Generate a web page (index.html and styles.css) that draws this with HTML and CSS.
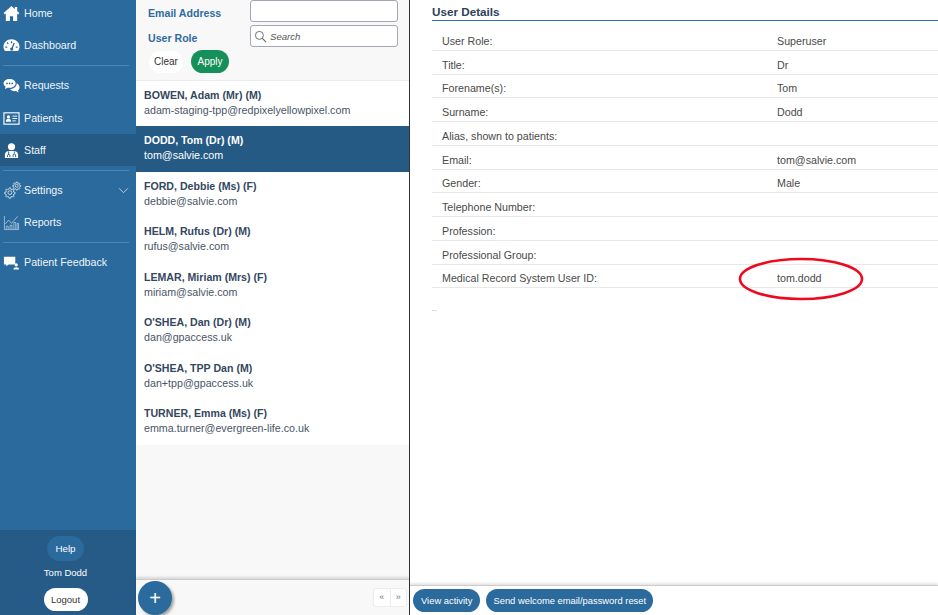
FILE: index.html
```html
<!DOCTYPE html>
<html lang="en">
<head>
<meta charset="utf-8">
<title>User Details</title>
<link rel="stylesheet" href="styles.css">
</head>
<body>
<div class="app">
  <aside class="sidebar">
    <nav class="nav">
      <a class="nav-item nav-first">
        <svg class="ico" viewBox="0 0 18 18"><path fill="#fff" d="M9 1 0.6 8.6 2 10l1-.9V17h4.3v-5h3.4v5H15V9.1l1 .9 1.4-1.4L15 6.4V2h-2.4v2.2z"/></svg>
        <span>Home</span>
      </a>
      <a class="nav-item">
        <svg class="ico" viewBox="0 0 18 18"><path fill="#fff" fill-rule="evenodd" d="M9 2.500C4.300 2.500.5 6 .5 10.400c0 1.500.4 2.800 1.200 4 .2.300.5.400.8.400h13c.3 0 .6-.1.800-.4.800-1.200 1.200-2.500 1.200-4C17.500 6 13.700 2.500 9 2.500zM8.300 4.500h1.400v2H8.300zM3.700 6.400l1-1 1.400 1.400-1 1zM2.500 10h2v1.400h-2zM13.500 10h2v1.400h-2zM11.200 6l1.300.6-2 5a1.700 1.700 0 1 1-1.300-.6z"/></svg>
        <span>Dashboard</span>
      </a>
      <div class="sep"></div>
      <a class="nav-item nav-tall">
        <svg class="ico" viewBox="0 0 18 18"><path fill="#fff" d="M7 2C3.400 2 .6 4 .6 6.700c0 1.500.9 2.800 2.200 3.700L2 12.800l3-1.500c.6.100 1.300.2 2 .2 3.600 0 6.400-2.100 6.400-4.800S10.600 2 7 2z"/><path fill="#fff" d="M14.500 6.500c.2 3.300-3 6-7 6.200.9 1.400 2.700 2.300 4.800 2.300.5 0 1 0 1.500-.1l2.700 1.600-.6-2.500c1-.7 1.600-1.700 1.600-2.900 0-1.900-1.200-3.700-3-4.600z"/><circle cx="4.300" cy="6.800" r=".9" fill="#2b6a9c"/><circle cx="7" cy="6.800" r=".9" fill="#2b6a9c"/><circle cx="9.700" cy="6.800" r=".9" fill="#2b6a9c"/></svg>
        <span>Requests</span>
      </a>
      <a class="nav-item">
        <svg class="ico" viewBox="0 0 18 18"><rect x="1" y="3" width="16" height="12" fill="none" stroke="#fff" stroke-width="1.200"/><circle cx="5.800" cy="7.300" r="1.700" fill="#fff"/><path fill="#fff" d="M3 12.500c0-2 1.200-3.200 2.800-3.200s2.800 1.200 2.800 3.200z"/><path stroke="#fff" stroke-width="1" d="M10 6.500h5M10 9h5M10 11.500h3.500"/></svg>
        <span>Patients</span>
      </a>
      <a class="nav-item nav-active">
        <svg class="ico" viewBox="0 0 18 18"><circle cx="9" cy="5" r="3.800" fill="#fff"/><path fill="#fff" d="M2 17v-3.500c0-2.500 2-4 4.500-4h5c2.500 0 4.500 1.500 4.500 4V17z"/><path fill="none" stroke="#255a85" stroke-width="1" d="M6 10v3.500M12 10v2M4.700 16v-1.500a1.300 1.300 0 0 1 2.600 0V16M10.700 16v-2a1.300 1.300 0 0 1 2.600 0v2"/></svg>
        <span>Staff</span>
      </a>
      <div class="sep"></div>
      <a class="nav-item">
        <svg class="ico ico-gears" viewBox="0 0 18 18" fill="none" stroke="#d5e3ef" stroke-width=".8"><circle cx="6.500" cy="11" r="1.800"/><path d="M6 6.500h1.200l.3 1.300 1 .4 1.100-.7.900.9-.7 1.100.4 1 1.300.3v1.200l-1.300.3-.4 1 .7 1.100-.9.900-1.100-.7-1 .4-.3 1.300H5.800l-.3-1.300-1-.4-1.100.7-.9-.9.7-1.100-.4-1-1.300-.3v-1.200l1.300-.3.4-1-.7-1.100.9-.9 1.100.7 1-.4z"/><circle cx="13" cy="4.500" r="1.400"/><path d="M12.500 1h1l.2 1 .7.300.9-.5.700.7-.5.900.3.700 1 .2v1l-1 .2-.3.700.5.900-.7.700-.9-.5-.7.300-.2 1h-1l-.2-1-.7-.3-.9.500-.7-.7.500-.9-.3-.7-1-.2v-1l1-.2.3-.7-.5-.9.7-.7.900.5.700-.3z"/></svg>
        <span class="nav-label">Settings</span>
        <svg class="chev" viewBox="0 0 12 8"><path fill="none" stroke="#c9dcec" stroke-width="1" d="M1 1.500 6 6.500l5-5"/></svg>
      </a>
      <a class="nav-item">
        <svg class="ico" viewBox="0 0 18 18" fill="none" stroke="#a9c6dd" stroke-width=".9"><path d="M1.500 2v14.500H17"/><path d="M2.500 10.500 6 6.500l3 3.500 6.500-7.500"/><path d="M3.500 16v-3h2v3M7.500 16v-4h2v4M11.500 16V9h2v7M15 16v-6h1.500v6"/></svg>
        <span>Reports</span>
      </a>
      <div class="sep"></div>
      <a class="nav-item">
        <svg class="ico" viewBox="0 0 18 18"><path fill="#fff" d="M1 3h12v8H6l-2.500 2v-2H1z"/><circle cx="14" cy="11.500" r="1.700" fill="#fff"/><path fill="#fff" d="M11 16.500c0-1.700 1.300-2.500 3-2.500s3 .8 3 2.500z"/></svg>
        <span>Patient Feedback</span>
      </a>
    </nav>
    <div class="side-foot">
      <button class="btn-help">Help</button>
      <div class="side-user">Tom Dodd</div>
      <button class="btn-logout">Logout</button>
    </div>
  </aside>

  <section class="middle">
    <form class="filters">
      <div class="filter-row filter-row-first">
        <label class="filter-label">Email Address</label>
        <div class="field"></div>
      </div>
      <div class="filter-row">
        <label class="filter-label">User Role</label>
        <div class="field field-search">
          <svg class="search-ico" viewBox="0 0 14 14"><circle cx="5.800" cy="5.800" r="4.300" fill="none" stroke="#666" stroke-width="1"/><path stroke="#666" stroke-width="1.200" d="m9 9 4 4"/></svg>
          <span>Search</span>
        </div>
      </div>
      <div class="filter-actions">
        <span class="btn-clear">Clear</span>
        <span class="btn-apply">Apply</span>
      </div>
    </form>
    <ul class="staff-list">
      <li class="staff"><b>BOWEN, Adam (Mr) (M)</b><span>adam-staging-tpp@redpixelyellowpixel.com</span></li>
      <li class="staff staff-active"><b>DODD, Tom (Dr) (M)</b><span>tom@salvie.com</span></li>
      <li class="staff"><b>FORD, Debbie (Ms) (F)</b><span>debbie@salvie.com</span></li>
      <li class="staff"><b>HELM, Rufus (Dr) (M)</b><span>rufus@salvie.com</span></li>
      <li class="staff"><b>LEMAR, Miriam (Mrs) (F)</b><span>miriam@salvie.com</span></li>
      <li class="staff"><b>O'SHEA, Dan (Dr) (M)</b><span>dan@gpaccess.uk</span></li>
      <li class="staff"><b>O'SHEA, TPP Dan (M)</b><span>dan+tpp@gpaccess.uk</span></li>
      <li class="staff"><b>TURNER, Emma (Ms) (F)</b><span>emma.turner@evergreen-life.co.uk</span></li>
    </ul>
    <div class="middle-foot">
      <button class="btn-add">+</button>
      <div class="pager"><span>«</span><span>»</span></div>
    </div>
  </section>

  <main class="details">
    <div class="details-body">
      <h2 class="details-title">User Details</h2>
      <dl class="rows">
        <div class="row"><dt>User Role:</dt><dd>Superuser</dd></div>
        <div class="row"><dt>Title:</dt><dd>Dr</dd></div>
        <div class="row"><dt>Forename(s):</dt><dd>Tom</dd></div>
        <div class="row"><dt>Surname:</dt><dd>Dodd</dd></div>
        <div class="row"><dt>Alias, shown to patients:</dt><dd></dd></div>
        <div class="row"><dt>Email:</dt><dd>tom@salvie.com</dd></div>
        <div class="row"><dt>Gender:</dt><dd>Male</dd></div>
        <div class="row"><dt>Telephone Number:</dt><dd></dd></div>
        <div class="row"><dt>Profession:</dt><dd></dd></div>
        <div class="row"><dt>Professional Group:</dt><dd></dd></div>
        <div class="row"><dt>Medical Record System User ID:</dt><dd>tom.dodd</dd></div>
      </dl>
      <div class="tick"></div>
      <svg class="circle" viewBox="0 0 126 44"><ellipse cx="63" cy="22" rx="61" ry="20" fill="none" stroke="#ee0a1e" stroke-width="2.600"/></svg>
    </div>
    <div class="details-foot">
      <button class="btn-blue">View activity</button>
      <button class="btn-blue btn-wide">Send welcome email/password reset</button>
    </div>
  </main>
</div>
</body>
</html>
```
FILE: styles.css
```css
* { box-sizing: border-box; }
html, body { margin: 0; height: 100%; }
body { font-family: "Liberation Sans", Arial, sans-serif; font-size: 10.700px; color: #444; background: #fff; overflow: hidden; }
button { font-family: inherit; border: 0; padding: 0; }
.app { display: flex; height: 615px; width: 938px; }

.sidebar { width: 136px; flex: none; background: #2b6a9c; display: flex; flex-direction: column; justify-content: space-between; }
.nav { display: flex; flex-direction: column; }
.nav-item { display: flex; align-items: center; height: 32px; padding: 0 7px 0 3px; color: #eef4f9; font-size: 10.700px; }
.nav-first { height: 26px; margin-bottom: 3px; }
.nav-tall { height: 33px; padding-bottom: 1px; }
.nav-active { background: #255a85; }
.nav-label { flex: 1; }
.ico { width: 17px; height: 17px; margin-right: 4px; flex: none; }
.ico-gears { width: 19px; height: 19px; margin: 0 2px 0 0; }
.chev { width: 11px; height: 7px; flex: none; }
.sep { height: 1px; background: #4d86b3; margin: 4px 7px 3px 3px; }
.side-foot { height: 85px; background: #265b87; display: flex; flex-direction: column; align-items: center; padding: 6px 5px 0 0; }
.btn-help { width: 37px; height: 25px; border-radius: 13px; background: #2b6a9c; color: #fff; font-size: 9.800px; }
.side-user { color: #fff; font-size: 9.500px; margin-top: 6px; line-height: 12px; }
.btn-logout { width: 44px; height: 23px; border-radius: 12px; background: #fff; color: #333; font-size: 9.500px; margin-top: 9px; }

.middle { width: 274px; flex: none; background: #f8f8f8; border-right: 1px solid #333; display: flex; flex-direction: column; }
.filters { height: 81px; flex: none; border-bottom: 1px solid #ececec; padding-left: 12px; display: flex; flex-direction: column; position: relative; }
.filter-row { display: flex; align-items: center; height: 22px; margin-top: 3px; }
.filter-row-first { margin-top: 0; }
.filter-label { width: 102px; padding-top: 4px; color: #2f6c9e; font-weight: bold; font-size: 10.600px; }
.field { width: 148px; height: 22px; border: 1px solid #a4a6b4; border-radius: 3px; background: #fff; display: flex; align-items: center; padding-top: 1px; font-style: italic; font-size: 9.600px; color: #555; }
.search-ico { width: 13px; height: 13px; margin: 0 3px 1px 3px; }
.filter-actions { display: flex; align-items: center; gap: 8px; margin-top: 3px; }
.btn-clear { width: 34px; height: 22px; border-radius: 11px; background: #fff; color: #333; font-size: 10px; display: flex; align-items: center; justify-content: center; margin-left: 1px; }
.btn-apply { width: 38px; height: 23px; border-radius: 12px; background: #15905a; color: #fff; font-size: 10px; display: flex; align-items: center; justify-content: center; }

.staff-list { list-style: none; margin: 0; padding: 0; flex: 1; }
.staff { height: 45.450px; background: #fff; padding: 8px 8px 0; display: flex; flex-direction: column; gap: 2px; color: #4a5568; font-size: 10.700px; line-height: 13px; }
.staff b { color: #33475f; font-size: 10.600px; }
.staff-active { background: #255a85; color: #fff; }
.staff-active b { color: #fff; }

.middle-foot { height: 36px; flex: none; border-top: 1px solid #ccc; box-shadow: 0 -2px 2px rgba(0,0,0,.12); display: flex; align-items: center; justify-content: space-between; padding: 0 2px 0 2px; position: relative; }
.btn-add { width: 34px; height: 34px; border-radius: 50%; background: #2b6a9c; color: #fff; font-size: 20px; line-height: 32px; box-shadow: 2px 2px 3px rgba(0,0,0,.35); margin-top: 1px; }
.pager { display: flex; width: 34px; height: 19px; border: 1px solid #ececec; border-radius: 3px; background: #fff; }
.pager span { flex: 1; text-align: center; font-size: 9px; line-height: 16px; color: #777; }
.pager span + span { border-left: 1px solid #ececec; }

.details { flex: 1; min-width: 0; display: flex; flex-direction: column; background: #fff; }
.details-body { flex: 1; padding: 0 0 0 22px; position: relative; }
.details-title { margin: 0; height: 21px; padding-top: 5px; font-size: 11.700px; line-height: 13px; color: #2c4159; border-bottom: 1px solid #2f6fa5; }
.rows { margin: 6px 0 0; }
.row { display: flex; align-items: center; height: 23.750px; border-bottom: 1px solid #e8e8e8; padding: 5px 0 0 10px; }
.row dt { width: 335px; flex: none; color: #4a4a4a; }
.row dd { margin: 0; color: #4a4a4a; }
.tick { width: 5px; height: 1px; background: #ddd; margin-top: 22px; }
.circle { position: absolute; left: 328px; top: 257px; width: 126px; height: 44px; }
.details-foot { height: 30px; flex: none; border-top: 1px solid #ccc; box-shadow: 0 -2px 2px rgba(0,0,0,.1); display: flex; align-items: flex-start; gap: 6px; padding: 3px 0 0 3px; }
.btn-blue { height: 23px; padding: 0 8px; border-radius: 12px; background: #2b6a9c; color: #fff; font-size: 9.400px; }
.btn-wide { padding: 0 7px; }
```
